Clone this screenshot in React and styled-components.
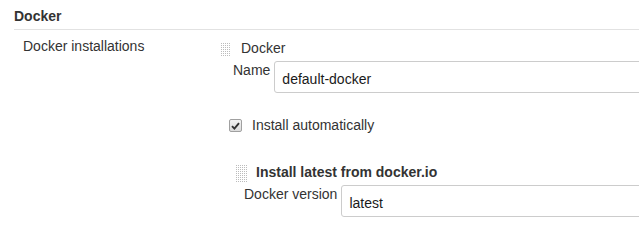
import styled, { createGlobalStyle } from "styled-components";

const GlobalStyle = createGlobalStyle`
  body {
    margin: 0;
    background: #fff;
    color: #333;
    font-family: "Liberation Sans", Arial, sans-serif;
    font-size: 14px;
    overflow: hidden;
  }
`;

const Page = styled.div`
  width: 639px;
  height: 249px;
  overflow: hidden;
`;

const SectionHeader = styled.div`
  margin-left: 14px;
  padding: 6px 0 3px 0;
  line-height: 20px;
  font-weight: bold;
  border-bottom: 1px solid #e2e2e2;
`;

const SettingRow = styled.div`
  display: flex;
  align-items: flex-start;
`;

const SettingName = styled.div`
  width: 198px;
  padding: 6px 0 0 23px;
  line-height: 20px;
  flex-shrink: 0;
`;

const SettingMain = styled.div`
  flex: 1;
  min-width: 0;
  padding-top: 8px;
`;

const Chunk = styled.div`
  margin-left: ${(p) => p.$indent || 0}px;
  margin-top: ${(p) => p.$top || 0}px;
`;

const ChunkHeader = styled.div`
  display: flex;
  align-items: flex-start;
  gap: ${(p) => p.$gap || 10}px;
  height: 20px;
  line-height: 20px;
  font-weight: ${(p) => (p.$bold ? "bold" : "normal")};
`;

const DragHandle = styled.span`
  display: inline-block;
  width: ${(p) => p.$w || 10}px;
  height: ${(p) => p.$h || 14}px;
  margin-top: ${(p) => p.$top || 5}px;
  background-image: linear-gradient(to bottom, transparent 1px, #fff 1px),
    linear-gradient(to right, #bcbcbc 1px, transparent 1px);
  background-size: 2px 2px, 2px 2px;
  flex-shrink: 0;
`;

const FieldRow = styled.div`
  display: flex;
  align-items: flex-start;
  margin-top: ${(p) => p.$top || 0}px;
  margin-left: ${(p) => p.$indent || 0}px;
`;

const FieldLabel = styled.label`
  line-height: 20px;
  margin-top: -1px;
  padding-right: 4px;
  white-space: nowrap;
`;

const TextInput = styled.input`
  flex: 1;
  min-width: 0;
  height: 32px;
  box-sizing: border-box;
  margin: 0 -20px 0 0;
  padding: 3px 7px 0 7px;
  border: 1px solid #ccc;
  border-radius: 3px;
  font-family: "Liberation Sans", Arial, sans-serif;
  font-size: 14px;
  color: #1a1a1a;
  background: #fff;
  outline: none;
`;

const CheckRow = styled.label`
  display: flex;
  align-items: center;
  gap: 10px;
  margin: 22px 0 0 8px;
  line-height: 20px;
`;

const CheckBox = styled.span`
  display: inline-flex;
  align-items: center;
  justify-content: center;
  width: 11px;
  height: 11px;
  border: 1px solid #a0a0a0;
  border-radius: 2px;
  background: linear-gradient(#f4f4f4, #dcdcdc);
  margin-top: 1px;
`;

const App = () => {
  return (
    <Page>
      <GlobalStyle />
      <SectionHeader>Docker</SectionHeader>
      <SettingRow>
        <SettingName>Docker installations</SettingName>
        <SettingMain>
          <Chunk>
            <ChunkHeader>
              <DragHandle />
              <span>Docker</span>
            </ChunkHeader>
            <FieldRow $top={3} $indent={12}>
              <FieldLabel>Name</FieldLabel>
              <TextInput defaultValue="default-docker" />
            </FieldRow>
          </Chunk>
          <CheckRow>
            <CheckBox>
              <svg width="9" height="8" viewBox="0 0 9 8">
                <path
                  d="M1 4.2 L3.4 6.6 L8 1.2"
                  fill="none"
                  stroke="#333"
                  strokeWidth="1.9"
                />
              </svg>
            </CheckBox>
            <span>Install automatically</span>
          </CheckRow>
          <Chunk $indent={15} $top={27}>
            <ChunkHeader $bold $gap={8}>
              <DragHandle $w={12} $h={17} $top={3} />
              <span>Install latest from docker.io</span>
            </ChunkHeader>
            <FieldRow $top={3} $indent={8}>
              <FieldLabel>Docker version</FieldLabel>
              <TextInput defaultValue="latest" />
            </FieldRow>
          </Chunk>
        </SettingMain>
      </SettingRow>
    </Page>
  );
};

export default App;
